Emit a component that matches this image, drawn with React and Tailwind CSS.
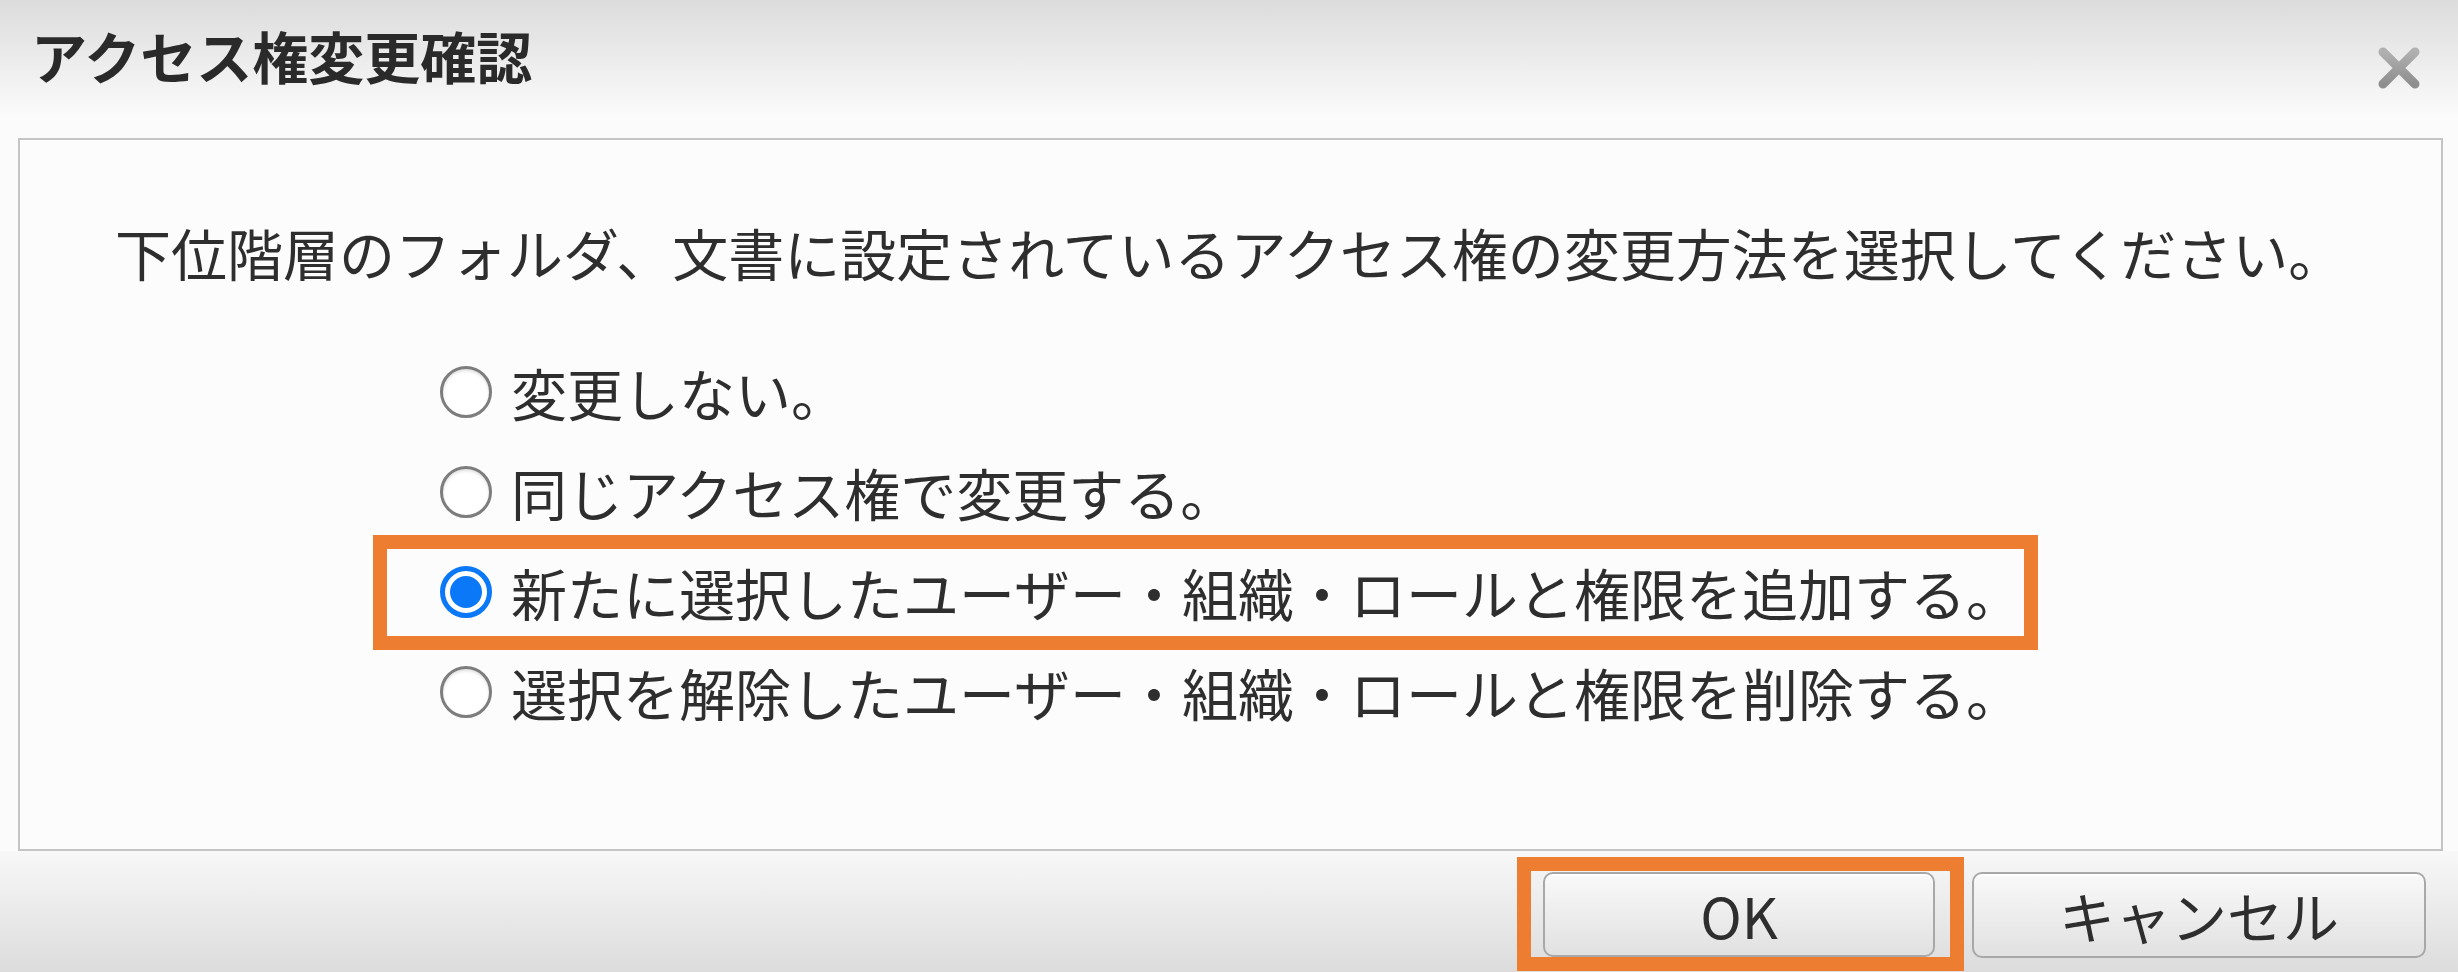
import { useState } from "react";

const options = [
  "変更しない。",
  "同じアクセス権で変更する。",
  "新たに選択したユーザー・組織・ロールと権限を追加する。",
  "選択を解除したユーザー・組織・ロールと権限を削除する。",
];

function Radio({ checked }) {
  if (checked) {
    return (
      <span className="flex h-[52px] w-[52px] shrink-0 items-center justify-center rounded-full border-[5px] border-[#0b79f7] bg-white">
        <span className="h-[32px] w-[32px] rounded-full bg-[#0b79f7]" />
      </span>
    );
  }
  return (
    <span className="h-[52px] w-[52px] shrink-0 rounded-full border-[3px] border-[#7d7d7d] bg-white shadow-[inset_0_2px_3px_rgba(0,0,0,0.12)]" />
  );
}

function CloseIcon() {
  return (
    <svg width="44" height="44" viewBox="0 0 44 44">
      <defs>
        <linearGradient id="xg" x1="0" y1="0" x2="0" y2="1">
          <stop offset="0" stopColor="#b0b0b0" />
          <stop offset="1" stopColor="#8e8e8e" />
        </linearGradient>
      </defs>
      <path d="M6 6 L38 38 M38 6 L6 38" stroke="url(#xg)" strokeWidth="9" strokeLinecap="round" fill="none" />
    </svg>
  );
}

export default function App() {
  const [selected, setSelected] = useState(2);

  return (
    <div
      className="flex h-[972px] w-[2458px] flex-col bg-[#fbfbfb] text-[#2e2e2e]"
      style={{ fontFamily: '"Noto Sans CJK JP", "Noto Sans", sans-serif' }}
    >
      {/* header */}
      <div className="flex h-[138px] shrink-0 items-start justify-between bg-linear-to-b from-[#dcdcdc] to-[#fbfbfb] to-85%">
        <h1 className="ml-[31px] mt-[27px] text-[56px] font-bold leading-[56px] text-[#2a2a2a]">
          アクセス権変更確認
        </h1>
        <button className="mr-[37px] mt-[46px]">
          <CloseIcon />
        </button>
      </div>

      {/* body */}
      <div className="flex shrink-0 pl-[18px] pr-[15px]">
        <div className="h-[713px] w-full border-2 border-[#c4c4c4] bg-[#fcfcfc] pl-[95px] pt-[84px]">
          <p className="text-[56px] leading-[56px]">
            下位階層のフォルダ、文書に設定されているアクセス権の変更方法を選択してください。
          </p>

          <div className="ml-[325px] mt-[62px] flex flex-col">
            {options.map((label, i) => (
              <label
                key={i}
                className="relative flex h-[100px] cursor-pointer items-center gap-[19px]"
                onClick={() => setSelected(i)}
              >
                <Radio checked={selected === i} />
                <span className="text-[56px] leading-[56px]">{label}</span>
                {i === 2 && (
                  <span className="pointer-events-none absolute left-[-67px] top-[-7px] h-[115px] w-[1665px] border-[14px] border-[#ed7d31]" />
                )}
              </label>
            ))}
          </div>
        </div>
      </div>

      {/* footer */}
      <div className="flex flex-1 items-start justify-end gap-[37px] bg-linear-to-b from-[#f8f8f8] to-[#dcdcdc] pr-[32px] pt-[21px]">
        <div className="relative">
          <button className="flex h-[85px] w-[392px] items-center justify-center rounded-[10px] border-2 border-[#a8a8a8] bg-linear-to-b from-[#f9f9f9] to-[#e1e1e1] text-[56px] leading-[56px] text-[#2e2e2e] shadow-[inset_0_2px_0_#ffffff]">
            OK
          </button>
          <span className="pointer-events-none absolute left-[-26px] top-[-15px] h-[114px] w-[447px] border-[14px] border-[#ed7d31]" />
        </div>
        <button className="flex h-[86px] w-[454px] items-center justify-center rounded-[10px] border-2 border-[#a8a8a8] bg-linear-to-b from-[#f9f9f9] to-[#e1e1e1] text-[56px] leading-[56px] text-[#2e2e2e] shadow-[inset_0_2px_0_#ffffff]">
          キャンセル
        </button>
      </div>
    </div>
  );
}
